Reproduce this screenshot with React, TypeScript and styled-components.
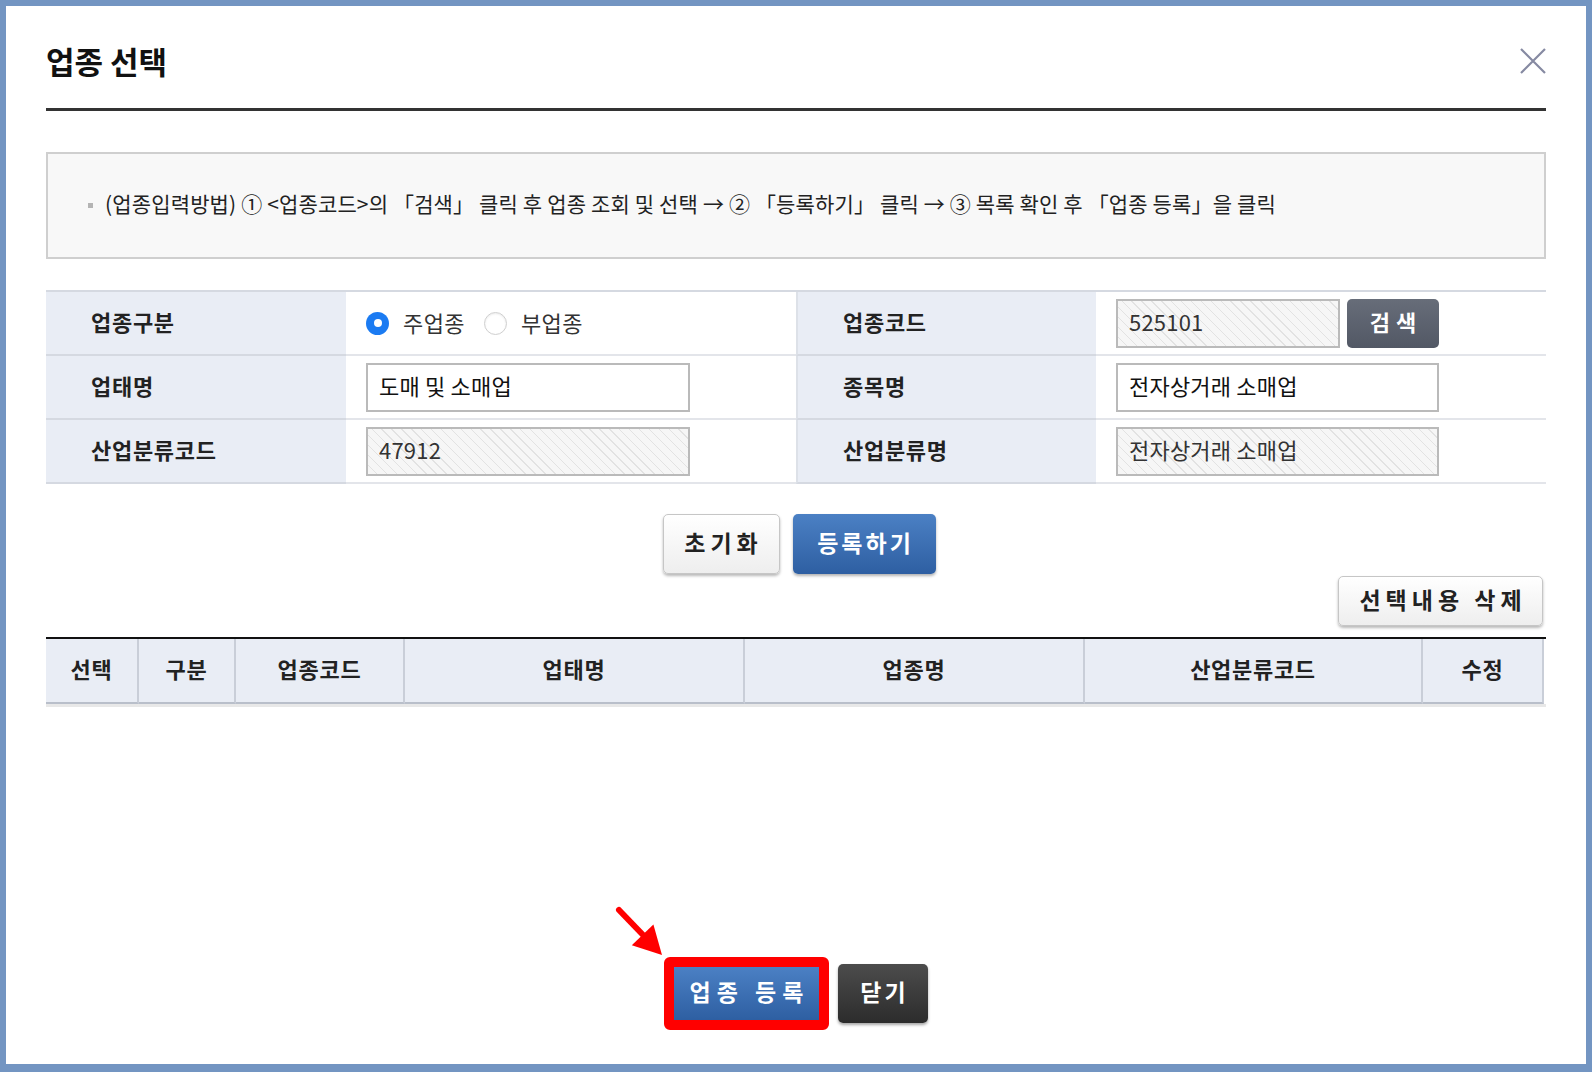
import React from 'react';
import styled, { createGlobalStyle, css } from 'styled-components';

const GlobalStyle = createGlobalStyle`
  html, body {
    margin: 0;
    padding: 0;
    background: #ffffff;
  }
  body {
    font-family: "Noto Sans CJK KR", "Noto Sans", "Liberation Sans", sans-serif;
    color: #222222;
  }
  * {
    box-sizing: border-box;
  }
`;

const Frame = styled.div`
  width: 1592px;
  height: 1072px;
  display: flex;
  flex-direction: column;
  padding: 0 40px;
  background: #ffffff;
  border: 6px solid #7395c2;
  border-bottom-width: 8px;
`;

const Header = styled.header`
  display: flex;
  justify-content: space-between;
  align-items: center;
  padding: 35px 0 27px;
  border-bottom: 3px solid #333333;
`;

const Title = styled.h2`
  margin: 0;
  font-size: 31px;
  line-height: 40px;
  font-weight: 700;
  color: #111111;
`;

const CloseButton = styled.button`
  width: 26px;
  height: 26px;
  padding: 0;
  border: 0;
  background: transparent;
  cursor: pointer;
  display: flex;
`;

const Notice = styled.div`
  margin-top: 41px;
  height: 107px;
  display: flex;
  align-items: center;
  padding: 0 0 5px 40px;
  background: #f8f8f8;
  border: 2px solid #cfcfcf;
  font-size: 21px;
  letter-spacing: 0.15px;
  color: #222222;
`;

const Bullet = styled.span`
  width: 5px;
  height: 5px;
  background: #b4b4b4;
  margin: 4px 12px 0 0;
  flex-shrink: 0;
`;

const FormGrid = styled.div`
  margin-top: 31px;
  display: grid;
  grid-template-columns: 300px 450px 300px 450px;
  grid-auto-rows: 64px;
  border-top: 2px solid #d5d9e1;
`;

const LabelCell = styled.div<{ $divider?: boolean }>`
  display: flex;
  align-items: center;
  padding: 0 0 5px 45px;
  background: #e9edf5;
  border-bottom: 2px solid #d5d9e1;
  font-size: 22px;
  letter-spacing: 0.7px;
  font-weight: 700;
  color: #222222;
  ${(p) =>
    p.$divider &&
    css`
      border-left: 2px solid #dde1e8;
    `}
`;

const ValueCell = styled.div`
  display: flex;
  align-items: center;
  gap: 7px;
  padding: 0 20px;
  border-bottom: 2px solid #e3e5ea;
`;

const TextInput = styled.input<{ $locked?: boolean; $width?: number }>`
  width: ${(p) => p.$width ?? 320}px;
  height: 49px;
  padding: 0 11px 4px;
  border: 2px solid #bababa;
  font-family: inherit;
  font-size: 22px;
  letter-spacing: 0.2px;
  color: ${(p) => (p.$locked ? '#333333' : '#111111')};
  background: #ffffff;
  outline: none;
  ${(p) =>
    p.$locked &&
    css`
      background: repeating-linear-gradient(
        45deg,
        #f6f6f6 0px,
        #f6f6f6 6px,
        #e2e2e2 6px,
        #e2e2e2 7px
      );
    `}
`;

const RadioLabel = styled.label`
  display: flex;
  align-items: center;
  gap: 14px;
  margin-right: 12px;
  padding-bottom: 3px;
  font-size: 22px;
  letter-spacing: 0.4px;
  color: #333333;
  cursor: pointer;
`;

const RadioDot = styled.span<{ $checked?: boolean }>`
  width: 23px;
  height: 23px;
  margin-top: 3px;
  border-radius: 50%;
  flex-shrink: 0;
  position: relative;
  ${(p) =>
    p.$checked
      ? css`
          background: #1b7bf2;
          &::after {
            content: '';
            position: absolute;
            left: 50%;
            top: 50%;
            width: 8px;
            height: 8px;
            margin: -4px 0 0 -4px;
            border-radius: 50%;
            background: #ffffff;
          }
        `
      : css`
          background: #ffffff;
          border: 1.5px solid #cfcfcf;
          box-shadow: inset 0 1px 2px rgba(0, 0, 0, 0.08);
        `}
`;

const SearchButton = styled.button`
  width: 92px;
  height: 49px;
  padding: 0 0 5px 6px;
  border: 0;
  border-radius: 5px;
  background: linear-gradient(#676d79, #525865);
  color: #ffffff;
  font-family: inherit;
  font-size: 22px;
  font-weight: 700;
  letter-spacing: 6px;
  cursor: pointer;
`;

const ActionRow = styled.div`
  margin-top: 30px;
  display: flex;
  justify-content: center;
  gap: 13px;
  padding-left: 6px;
`;

const Button = styled.button<{ $variant: 'light' | 'blue' | 'dark'; $w: number; $h: number; $spacing?: number }>`
  width: ${(p) => p.$w}px;
  height: ${(p) => p.$h}px;
  border-radius: 5px;
  font-family: inherit;
  font-size: 23px;
  font-weight: 700;
  letter-spacing: ${(p) => p.$spacing ?? 3}px;
  padding: 0 0 5px ${(p) => p.$spacing ?? 3}px;
  cursor: pointer;
  ${(p) =>
    p.$variant === 'light' &&
    css`
      color: #222222;
      background: linear-gradient(#ffffff, #eeeeee);
      border: 1px solid #c6c6c6;
      box-shadow: 0 2px 3px rgba(0, 0, 0, 0.28);
    `}
  ${(p) =>
    p.$variant === 'blue' &&
    css`
      color: #ffffff;
      background: linear-gradient(#4b80c4, #2e5fa2);
      border: 0;
      box-shadow: 0 2px 3px rgba(0, 0, 0, 0.3);
    `}
  ${(p) =>
    p.$variant === 'dark' &&
    css`
      color: #ffffff;
      background: linear-gradient(#4c4c4c, #2c2c2c);
      border: 0;
      box-shadow: 0 2px 3px rgba(0, 0, 0, 0.35);
    `}
`;

const FlatBlueButton = styled(Button)`
  border-radius: 0;
  box-shadow: none;
`;

const DeleteRow = styled.div`
  margin-top: 2px;
  display: flex;
  justify-content: flex-end;
  padding-right: 3px;
`;

const ListTable = styled.div`
  margin-top: 11px;
  display: grid;
  grid-template-columns: 93px 97px 169px 340px 340px 338px 121px;
  border-top: 2px solid #111111;
  box-shadow: 0 3px 0 #e8e8e8;
`;

const ListHead = styled.div`
  height: 65px;
  display: flex;
  align-items: center;
  justify-content: center;
  padding-bottom: 5px;
  background: #e9edf5;
  border-right: 2px solid #c9ced8;
  border-bottom: 2px solid #b9bfca;
  font-size: 22px;
  letter-spacing: 0.7px;
  font-weight: 700;
  color: #222222;
`;

const Footer = styled.footer`
  margin-top: auto;
  padding-bottom: 34px;
  display: flex;
  justify-content: center;
  align-items: center;
  gap: 9px;
`;

const Highlight = styled.div`
  position: relative;
  border: 10px solid #ff0000;
  border-radius: 6px;
  display: flex;
`;

const Pointer = styled.svg`
  position: absolute;
  left: -60px;
  top: -62px;
`;

const listColumns = ['선택', '구분', '업종코드', '업태명', '업종명', '산업분류코드', '수정'];

export default function App() {
  return (
    <>
      <GlobalStyle />
      <Frame>
        <Header>
          <Title>업종 선택</Title>
          <CloseButton aria-label="닫기">
            <svg width="26" height="26" viewBox="0 0 26 26">
              <path d="M1 1 L25 25 M25 1 L1 25" stroke="#868aa2" strokeWidth="2.2" fill="none" />
            </svg>
          </CloseButton>
        </Header>

        <Notice>
          <Bullet />
          (업종입력방법) ① &lt;업종코드&gt;의 「검색」 클릭 후 업종 조회 및 선택 → ② 「등록하기」 클릭 → ③ 목록 확인 후 「업종 등록」을 클릭
        </Notice>

        <FormGrid>
          <LabelCell>업종구분</LabelCell>
          <ValueCell>
            <RadioLabel>
              <RadioDot $checked />
              주업종
            </RadioLabel>
            <RadioLabel>
              <RadioDot />
              부업종
            </RadioLabel>
          </ValueCell>
          <LabelCell $divider>업종코드</LabelCell>
          <ValueCell>
            <TextInput $locked $width={224} defaultValue="525101" readOnly />
            <SearchButton>검색</SearchButton>
          </ValueCell>

          <LabelCell>업태명</LabelCell>
          <ValueCell>
            <TextInput $width={324} defaultValue="도매 및 소매업" />
          </ValueCell>
          <LabelCell $divider>종목명</LabelCell>
          <ValueCell>
            <TextInput $width={323} defaultValue="전자상거래 소매업" />
          </ValueCell>

          <LabelCell>산업분류코드</LabelCell>
          <ValueCell>
            <TextInput $locked $width={324} defaultValue="47912" readOnly />
          </ValueCell>
          <LabelCell $divider>산업분류명</LabelCell>
          <ValueCell>
            <TextInput $locked $width={323} defaultValue="전자상거래 소매업" readOnly />
          </ValueCell>
        </FormGrid>

        <ActionRow>
          <Button $variant="light" $w={117} $h={60} $spacing={5}>
            초기화
          </Button>
          <Button $variant="blue" $w={143} $h={60} $spacing={3}>
            등록하기
          </Button>
        </ActionRow>

        <DeleteRow>
          <Button $variant="light" $w={205} $h={50} $spacing={5}>
            선택내용 삭제
          </Button>
        </DeleteRow>

        <ListTable>
          {listColumns.map((c) => (
            <ListHead key={c}>{c}</ListHead>
          ))}
        </ListTable>

        <Footer>
          <Highlight>
            <Pointer width="52" height="54" viewBox="0 0 52 54">
              <path d="M5 5 L31 32" stroke="#ff0000" strokeWidth="6" strokeLinecap="round" />
              <path d="M48 50 L17.8 40.2 L39.4 19.4 Z" fill="#ff0000" />
            </Pointer>
            <FlatBlueButton $variant="blue" $w={145} $h={53} $spacing={6}>
              업종 등록
            </FlatBlueButton>
          </Highlight>
          <Button $variant="dark" $w={90} $h={59} $spacing={3}>
            닫기
          </Button>
        </Footer>
      </Frame>
    </>
  );
}
